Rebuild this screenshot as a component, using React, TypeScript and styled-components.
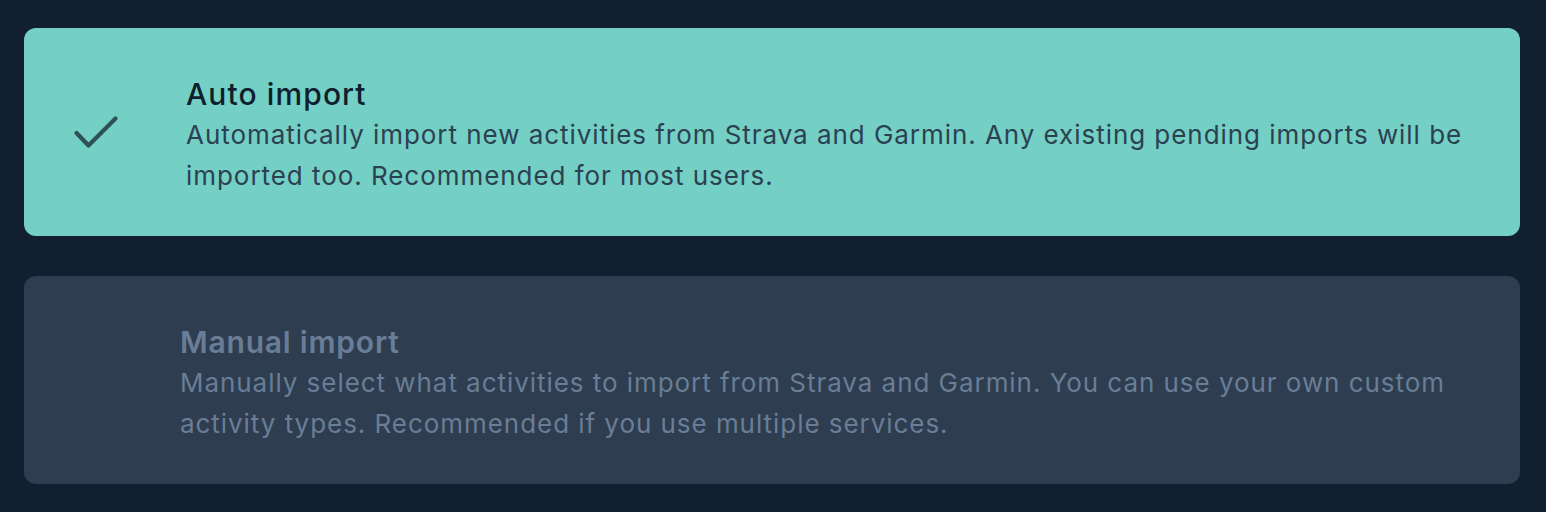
import React from "react";
import styled, { createGlobalStyle } from "styled-components";

const GlobalStyle = createGlobalStyle`
  html, body {
    margin: 0;
    padding: 0;
    background: #111f30;
  }
  body {
    font-family: Inter, "Noto Sans", sans-serif;
    -webkit-font-smoothing: antialiased;
  }
`;

const Page = styled.div`
  display: flex;
  flex-direction: column;
  gap: 40px;
  padding: 28px 26px 28px 24px;
  min-height: 512px;
  box-sizing: border-box;
  background: #111f30;
`;

const Card = styled.button<{ $active: boolean; $indent: number }>`
  all: unset;
  box-sizing: border-box;
  display: grid;
  grid-template-columns: ${(p) => p.$indent}px 1fr;
  align-items: center;
  height: 208px;
  padding: 0 40px 0 0;
  border-radius: 12px;
  background: ${(p) => (p.$active ? "#74cfc4" : "#2e3d50")};
  cursor: pointer;
`;

const IconSlot = styled.div`
  display: flex;
  justify-content: center;
  align-items: center;
  padding-right: 19px;
`;

const Body = styled.div`
  display: flex;
  flex-direction: column;
  gap: 2px;
  padding-top: 8px;
`;

const Title = styled.div<{ $active: boolean }>`
  font-size: 30px;
  line-height: 36px;
  font-weight: ${(p) => (p.$active ? 500 : 600)};
  letter-spacing: ${(p) => (p.$active ? 1.1 : 0.8)}px;
  color: ${(p) => (p.$active ? "#0f1f2e" : "#6a7d96")};
`;

const Desc = styled.div<{ $active: boolean }>`
  font-size: 26px;
  line-height: 41px;
  font-weight: 400;
  letter-spacing: 0.95px;
  color: ${(p) => (p.$active ? "#2b4152" : "#6a7d96")};
`;

const Check = () => (
  <svg width="48" height="36" viewBox="0 0 48 36" fill="none">
    <path
      d="M4.5 19 L16.5 31.5 L43.5 4.5"
      stroke="#2d5253"
      strokeWidth="4.2"
      strokeLinecap="round"
      strokeLinejoin="round"
    />
  </svg>
);

const options = [
  {
    id: "auto",
    title: "Auto import",
    desc: "Automatically import new activities from Strava and Garmin. Any existing pending imports will be imported too. Recommended for most users.",
    active: true,
    indent: 162,
  },
  {
    id: "manual",
    title: "Manual import",
    desc: "Manually select what activities to import from Strava and Garmin. You can use your own custom activity types. Recommended if you use multiple services.",
    active: false,
    indent: 156,
  },
];

export default function App() {
  return (
    <>
      <GlobalStyle />
      <Page>
        {options.map((o) => (
          <Card key={o.id} $active={o.active} $indent={o.indent}>
            <IconSlot>{o.active ? <Check /> : null}</IconSlot>
            <Body>
              <Title $active={o.active}>{o.title}</Title>
              <Desc $active={o.active}>{o.desc}</Desc>
            </Body>
          </Card>
        ))}
      </Page>
    </>
  );
}
